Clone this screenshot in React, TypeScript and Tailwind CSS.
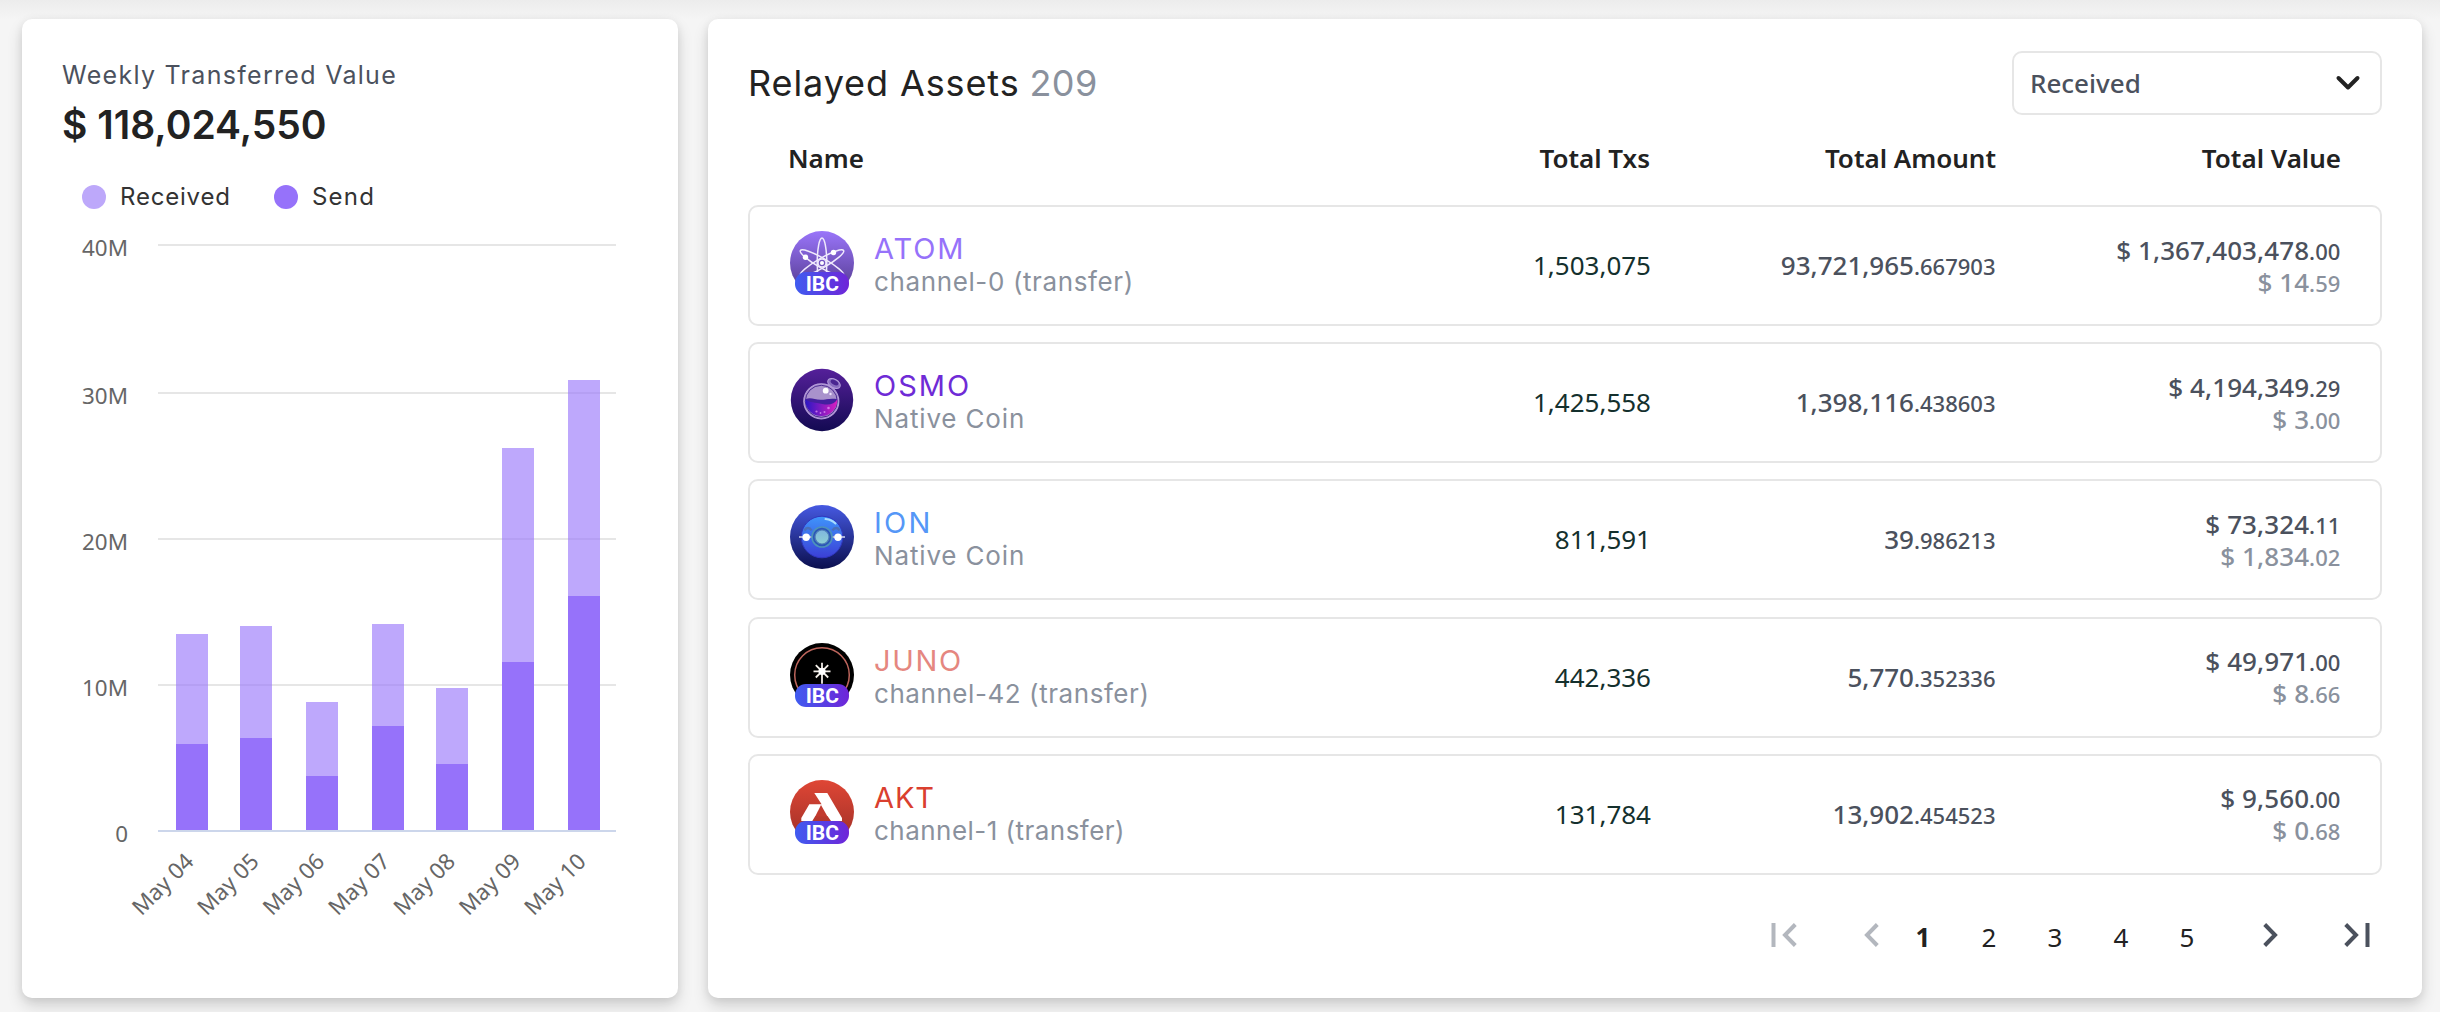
import React from "react";

const INTER = "font-['Inter',sans-serif]";

const days = [
  { label: "May 04", x: 176, top: 634, send: 744 },
  { label: "May 05", x: 240, top: 626, send: 738 },
  { label: "May 06", x: 306, top: 702, send: 776 },
  { label: "May 07", x: 372, top: 624, send: 726 },
  { label: "May 08", x: 436, top: 688, send: 764 },
  { label: "May 09", x: 502, top: 448, send: 662 },
  { label: "May 10", x: 568, top: 380, send: 596 },
];

const ticks = [
  { label: "40M", y: 245 },
  { label: "30M", y: 393 },
  { label: "20M", y: 539 },
  { label: "10M", y: 685 },
  { label: "0", y: 831 },
];

function Chart() {
  return (
    <svg viewBox="22 220 656 720" className="block h-[720px] w-[656px]">
      {ticks.map((t) => (
        <g key={t.label}>
          {t.label !== "0" && <rect x={158} y={t.y - 1} width={458} height={2} fill="#e6e6e6" />}
          <text x={128} y={t.y + 10.5} textAnchor="end" fontSize={22.4} fill="#666666" className="font-['Noto_Sans',sans-serif]">
            {t.label}
          </text>
        </g>
      ))}
      {days.map((d, i) => (
        <g key={d.label}>
          <rect x={d.x} y={d.top} width={32} height={d.send - d.top} fill="#9672fa" fillOpacity={0.62} />
          <rect x={d.x} y={d.send} width={32} height={830 - d.send} fill="#9672fa" />
          <text
            transform={`translate(${195 + i * 65.4} 863) rotate(-45)`}
            textAnchor="end"
            fontSize={22.4}
            fill="#666666"
            className="font-['Noto_Sans',sans-serif]"
          >
            {d.label}
          </text>
        </g>
      ))}
      <rect x={158} y={830} width={458} height={2} fill="#ccd6eb" />
    </svg>
  );
}

function IbcBadge() {
  return (
    <g>
      <rect x={5} y={41} width={54} height={23} rx={11} fill="url(#ibc)" />
      <text x={32.3} y={60} textAnchor="middle" fontSize={21} fontWeight={700} fill="#fff" className="font-['Roboto',sans-serif]">
        IBC
      </text>
    </g>
  );
}

function Gradient({ id, from, to, horizontal }: { id: string; from: string; to: string; horizontal?: boolean }) {
  return (
    <linearGradient id={id} x1="0" y1="0" x2={horizontal ? "1" : "0"} y2={horizontal ? "0" : "1"}>
      <stop offset="0" stopColor={from} />
      <stop offset="1" stopColor={to} />
    </linearGradient>
  );
}

function AtomIcon() {
  return (
    <svg viewBox="0 0 64 64" className="size-16">
      <defs>
        <Gradient id="ibc" from="#3f5cf0" to="#6f25d8" horizontal />
        <Gradient id="atom" from="#9a75fa" to="#4f3787" />
      </defs>
      <circle cx={32} cy={32} r={32} fill="url(#atom)" />
      <g fill="none" stroke="#efe9fc" strokeWidth={1.5}>
        <ellipse cx={32} cy={32} rx={4.8} ry={25} />
        <ellipse cx={32} cy={32} rx={4.8} ry={25} transform="rotate(60 32 32)" />
        <ellipse cx={32} cy={32} rx={4.8} ry={25} transform="rotate(-60 32 32)" />
        <circle cx={32} cy={32} r={4} />
      </g>
      <circle cx={32} cy={32} r={2} fill="#fff" />
      <circle cx={15.5} cy={26.3} r={2.7} fill="#fff" />
      <circle cx={43.5} cy={21.5} r={2.7} fill="#fff" />
      <IbcBadge />
    </svg>
  );
}

function OsmoIcon() {
  return (
    <svg viewBox="0 0 64 64" className="size-16">
      <defs>
        <Gradient id="osmo" from="#55209a" to="#130a52" />
        <Gradient id="liquid" from="#2b17c4" to="#d81fc0" horizontal />
      </defs>
      <circle cx={32} cy={32} r={31.2} fill="url(#osmo)" />
      <path d="M37 16l4 6 8-2.500-2-6z" fill="#7d5cb4" />
      <ellipse cx={44} cy={15.5} rx={6.8} ry={4.2} transform="rotate(28 44 15.500)" fill="#8a6fc0" stroke="#b49ddb" strokeWidth={1} />
      <ellipse cx={44.5} cy={14.5} rx={4.2} ry={2.2} transform="rotate(28 44.500 14.500)" fill="#4a2691" />
      <circle cx={31.3} cy={33.3} r={17.5} fill="#a992cc" stroke="#b39ada" strokeWidth={1.2} />
      <circle cx={31.3} cy={33.3} r={16} fill="none" stroke="#4b2a92" strokeWidth={1} />
      <path d="M15.300 31.500c5-2 9 1.500 14 1.500s11-3.500 18-1.500a16 16 0 0 1-32 1z" fill="url(#liquid)" />
      <path d="M15.500 31.300c5-2.500 9 .5 15 .5s10-2 16.800-.6c-3 5-8 6.300-15 4.800s-13-1.200-16.800-4.700z" fill="#43209f" />
      <circle cx={35.7} cy={22.7} r={2.9} fill="#fff" />
      <circle cx={40.5} cy={26} r={1.2} fill="#e9defa" />
      <g fill="#d98cf0" fillOpacity={0.8}>
        <circle cx={38.5} cy={40} r={1.3} />
        <circle cx={26.5} cy={43.5} r={1.1} />
        <circle cx={30.5} cy={45} r={0.9} />
        <circle cx={34.5} cy={44} r={1} />
      </g>
    </svg>
  );
}

function IonIcon() {
  return (
    <svg viewBox="0 0 64 64" className="size-16">
      <defs>
        <Gradient id="ion" from="#4659e2" to="#0b0f4e" />
        <Gradient id="planet" from="#3f95fb" to="#3b3fd6" />
        <Gradient id="core" from="#7fb6dd" to="#8fd0d4" />
      </defs>
      <circle cx={32} cy={32} r={32} fill="url(#ion)" />
      <circle cx={32} cy={32} r={20.8} fill="url(#planet)" stroke="#3036c0" strokeWidth={1} />
      <path d="M14.500 25.500c1.500-3 5-3.500 7 0M42.500 25.500c2-3.500 5.500-3 7 0" fill="none" stroke="#4a6fb8" strokeWidth={2.5} />
      <path d="M35.500 14c4 .5 7.500 2 10 4.500" fill="none" stroke="#a9dcff" strokeWidth={2} strokeLinecap="round" />
      <path d="M9 32h46" stroke="#a7b0dd" strokeWidth={1.8} />
      <circle cx={32} cy={32} r={10} fill="#2c56b8" stroke="#4d93ba" strokeWidth={1.6} />
      <circle cx={32} cy={32} r={7} fill="url(#core)" stroke="#4f7fb8" strokeWidth={1.2} />
      <circle cx={16.2} cy={32.3} r={3.7} fill="#fff" />
      <circle cx={48} cy={32.3} r={3.7} fill="#fff" />
    </svg>
  );
}

function JunoIcon() {
  return (
    <svg viewBox="0 0 64 64" className="size-16">
      <circle cx={32} cy={32} r={32} fill="#000" />
      <circle cx={32} cy={32} r={27.3} fill="none" stroke="#bd655c" strokeWidth={1.5} />
      <path d="M32 19.800v21M23.500 28.300h17M25.800 22.100l12.400 12.400M38.200 22.100L25.800 34.500" stroke="#f4efe9" strokeWidth={1.8} />
      <circle cx={32} cy={28.3} r={3.6} fill="#fff" />
      <IbcBadge />
    </svg>
  );
}

function AktIcon() {
  return (
    <svg viewBox="0 0 64 64" className="size-16">
      <defs>
        <Gradient id="akt" from="#df4635" to="#9c2f27" />
      </defs>
      <circle cx={32} cy={32} r={32} fill="url(#akt)" />
      <path d="M24.300 13h13L52 38v3H41L37.500 36H25.300l-3 5h-11v-3l8-13.700h12.300z" fill="#fff" />
      <path d="M31 25l6.500 11.500H25.200z" fill="#c23a2e" />
      <IbcBadge />
    </svg>
  );
}

const assets = [
  { Icon: AtomIcon, name: "ATOM", color: "text-[#9672fa]", sub: "channel-0 (transfer)", nameLs: "tracking-[1.9px]", subLs: "tracking-[0.62px]", txs: "1,503,075", amount: ["93,721,965", ".667903"], value: ["$ 1,367,403,478", ".00"], price: ["$ 14", ".59"] },
  { Icon: OsmoIcon, name: "OSMO", color: "text-[#6f2bd6]", sub: "Native Coin", nameLs: "tracking-[2px]", subLs: "tracking-[0.85px]", txs: "1,425,558", amount: ["1,398,116", ".438603"], value: ["$ 4,194,349", ".29"], price: ["$ 3", ".00"] },
  { Icon: IonIcon, name: "ION", color: "text-[#5597f7]", sub: "Native Coin", nameLs: "tracking-[2.3px]", subLs: "tracking-[0.85px]", txs: "811,591", amount: ["39", ".986213"], value: ["$ 73,324", ".11"], price: ["$ 1,834", ".02"] },
  { Icon: JunoIcon, name: "JUNO", color: "text-[#e58780]", sub: "channel-42 (transfer)", nameLs: "tracking-[1.7px]", subLs: "tracking-[0.56px]", txs: "442,336", amount: ["5,770", ".352336"], value: ["$ 49,971", ".00"], price: ["$ 8", ".66"] },
  { Icon: AktIcon, name: "AKT", color: "text-[#da3f2f]", sub: "channel-1 (transfer)", nameLs: "tracking-[0.9px]", subLs: "tracking-[0.47px]", txs: "131,784", amount: ["13,902", ".454523"], value: ["$ 9,560", ".00"], price: ["$ 0", ".68"] },
];

function Num({ parts }: { parts: string[] }) {
  return (
    <>
      {parts[0]}
      <span className="text-[22px]">{parts[1]}</span>
    </>
  );
}

const COLS = "grid grid-cols-[1fr_345px_346px_345px]";
const CARD = "rounded-[10px] bg-white shadow-[0_8px_16px_rgba(0,0,0,0.14),0_2px_8px_rgba(0,0,0,0.08)]";

function Chevron({ left, bar, color }: { left?: boolean; bar?: boolean; color: string }) {
  return (
    <svg viewBox="0 0 26 24" className={`h-6 w-[26px] ${color} ${left ? "-scale-x-100" : ""}`} fill="none" stroke="currentColor" strokeWidth={4}>
      <path d="M1.700 1.500L12 12 1.700 22.500" />
      {bar && <path d="M23.500 0v24" />}
    </svg>
  );
}

export default function App() {
  return (
    <div className="h-[1012px] w-[2440px] overflow-hidden bg-[#f5f5f5] font-['Noto_Sans',sans-serif] text-[#222222]">
      <div className="h-[19px] bg-linear-to-b from-[#ececec] to-[#f5f5f5]" />
      <div className="ml-[22px] flex gap-[30px]">
        <section className={`h-[979px] w-[656px] ${CARD}`}>
          <div className={`px-10 pt-9 ${INTER}`}>
            <div className="h-10 whitespace-nowrap text-[25px] leading-10 tracking-[1.3px] text-[#4b515d]">Weekly Transferred Value</div>
            <div className="h-[60px] whitespace-nowrap text-[39px] font-semibold leading-[60px]">$ 118,024,550</div>
          </div>
          <div className={`mt-[15px] flex h-[46px] items-center pl-[60px] pt-[8px] text-[24px] text-[#333333] ${INTER}`}>
            <span className="size-6 rounded-full bg-[#bda8fa]" />
            <span className="ml-[14px] w-[154px] tracking-[0.8px]">Received</span>
            <span className="size-6 rounded-full bg-[#9672fa]" />
            <span className="ml-[14px] tracking-[1.2px]">Send</span>
          </div>
          <div className="mt-[4px]">
            <Chart />
          </div>
        </section>

        <section className={`h-[979px] w-[1714px] px-10 ${CARD}`}>
          <div className="flex h-[96px] justify-between pt-8">
            <h2 className={`h-16 whitespace-nowrap text-[36px] leading-[64px] tracking-[0.9px] ${INTER}`}>
              Relayed Assets <span className="-ml-px tracking-[0.3px] text-[#8a919d]">209</span>
            </h2>
            <div className="flex h-16 w-[370px] items-center justify-between rounded-[10px] border-2 border-[#e6e6e6] pl-4 pr-[19px]">
              <span className="text-[26px] font-medium text-[#4b515d]">Received</span>
              <svg viewBox="0 0 26 16" className="h-4 w-[26px]" fill="none" stroke="#222" strokeWidth={4} strokeLinecap="round" strokeLinejoin="round">
                <path d="M3.500 3L13 12.500 22.500 3" />
              </svg>
            </div>
          </div>
          <div className={`${COLS} h-[90px] pl-10 pr-[41px] pt-[23px] text-[26px] font-semibold leading-10`}>
            <span>Name</span>
            <span className="text-right">Total Txs</span>
            <span className="text-right">Total Amount</span>
            <span className="text-right">Total Value</span>
          </div>
          <div className="flex flex-col gap-[16.2px]">
            {assets.map((a) => (
              <div key={a.name} className={`${COLS} h-[121px] items-center rounded-[10px] border-2 border-[#e6e6e6] px-[38px] text-[26px]`}>
                <div className="flex items-center">
                  <div className="mb-[5px] ml-[2px] size-16">
                    <a.Icon />
                  </div>
                  <div className={`ml-5 whitespace-nowrap ${INTER}`}>
                    <div className={`text-[29px] leading-8 ${a.nameLs} ${a.color}`}>{a.name}</div>
                    <div className={`text-[26px] leading-[33px] text-[#8a919d] ${a.subLs}`}>{a.sub}</div>
                  </div>
                </div>
                <div className="text-right text-[#14302d]">{a.txs}</div>
                <div className="pr-[1.5px] text-right font-medium text-[#4b515d]">
                  <Num parts={a.amount} />
                </div>
                <div className="pr-[1.5px] text-right font-medium leading-8 tracking-[0.08px] text-[#4b515d]">
                  <div className="h-8"><Num parts={a.value} /></div>
                  <div className="h-8 text-[#8a919d]"><Num parts={a.price} /></div>
                </div>
              </div>
            ))}
          </div>
          <nav className="mt-[40px] flex h-10 items-center justify-end pr-[12px] text-[26px]">
            <Chevron left bar color="text-[#b3b7be]" />
            <span className="ml-[56px]"><Chevron left color="text-[#b3b7be]" /></span>
            <span className="ml-[11px] mt-[5px] flex">
              {[1, 2, 3, 4, 5].map((n) => (
                <span key={n} className={`w-[66px] text-center leading-10 ${n === 1 ? "font-bold" : ""}`}>{n}</span>
              ))}
            </span>
            <span className="ml-[43px]"><Chevron color="text-[#4b515d]" /></span>
            <span className="ml-[55px]"><Chevron bar color="text-[#4b515d]" /></span>
          </nav>
        </section>
      </div>
    </div>
  );
}
